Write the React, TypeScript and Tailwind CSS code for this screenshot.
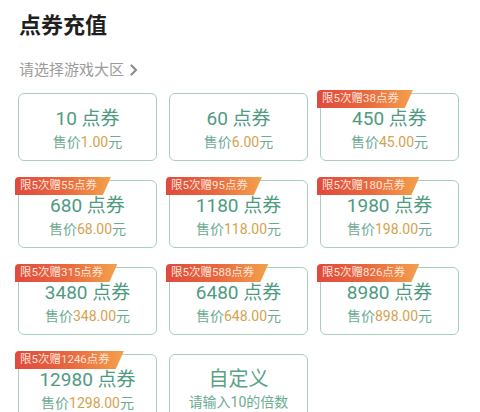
import React from 'react';

type Pack = { amount: string; price?: string; badge?: string };

const packs: Pack[] = [
  { amount: '10', price: '1.00' },
  { amount: '60', price: '6.00' },
  { amount: '450', price: '45.00', badge: '限5次赠38点券' },
  { amount: '680', price: '68.00', badge: '限5次赠55点券' },
  { amount: '1180', price: '118.00', badge: '限5次赠95点券' },
  { amount: '1980', price: '198.00', badge: '限5次赠180点券' },
  { amount: '3480', price: '348.00', badge: '限5次赠315点券' },
  { amount: '6480', price: '648.00', badge: '限5次赠588点券' },
  { amount: '8980', price: '898.00', badge: '限5次赠826点券' },
  { amount: '12980', price: '1298.00', badge: '限5次赠1246点券' },
];

function Card({ pack }: { pack: Pack }) {
  return (
    <div className="relative h-[68px] rounded-[6px] border-[1.5px] border-[#a8cfc1] bg-white flex flex-col items-center justify-center">
      {pack.badge && (
        <div className="absolute -left-[4px] -top-[4px] h-[18px] pl-[5px] pr-[14px] flex items-center rounded-tl-[4px] bg-gradient-to-r from-[#df4a3e] via-[#e8673f] to-[#f3a04b] text-[11.5px] leading-none text-[#fde6dc] [clip-path:polygon(0_0,100%_0,calc(100%-8px)_100%,0_100%)]">
          {pack.badge}
        </div>
      )}
      <div className="text-[19px] leading-[24px] text-[#4e9b7f] mt-[4px]">
        {pack.amount} 点券
      </div>
      <div className="text-[14px] leading-[20px] text-[#6cab93] mt-[1px]">
        售价<span className="text-[#d5a24f]">{pack.price}</span>元
      </div>
    </div>
  );
}

export default function App() {
  return (
    <div
      className="w-[480px] h-[412px] overflow-hidden bg-white pl-[18px] pt-[10px]"
      style={{ fontFamily: 'Roboto, "Noto Sans CJK SC", "Noto Sans", sans-serif' }}
    >
      <h1 className="text-[22px] leading-[32px] font-bold text-[#1f1f1f] ml-[1px]">点券充值</h1>
      <div className="mt-[17px] ml-[1px] flex items-center gap-[6px] text-[15px] leading-[22px] text-[#9b9b9b]">
        <span>请选择游戏大区</span>
        <svg width="8" height="12" viewBox="0 0 8 12" fill="none">
          <path d="M1.5 1.5 L6 6 L1.5 10.5" stroke="#8e8e8e" strokeWidth="2.2" strokeLinecap="round" strokeLinejoin="round" />
        </svg>
      </div>
      <div className="mt-[12px] grid grid-cols-[139px_139px_139px] gap-x-[12px] gap-y-[19px]">
        {packs.map((p) => (
          <Card key={p.amount} pack={p} />
        ))}
        <div className="h-[68px] rounded-[6px] border-[1.5px] border-[#a8cfc1] bg-white flex flex-col items-center justify-center">
          <div className="text-[20px] leading-[26px] text-[#5aa287] mt-[2px]">自定义</div>
          <div className="text-[14px] leading-[20px] text-[#6cab93]">请输入10的倍数</div>
        </div>
      </div>
    </div>
  );
}
